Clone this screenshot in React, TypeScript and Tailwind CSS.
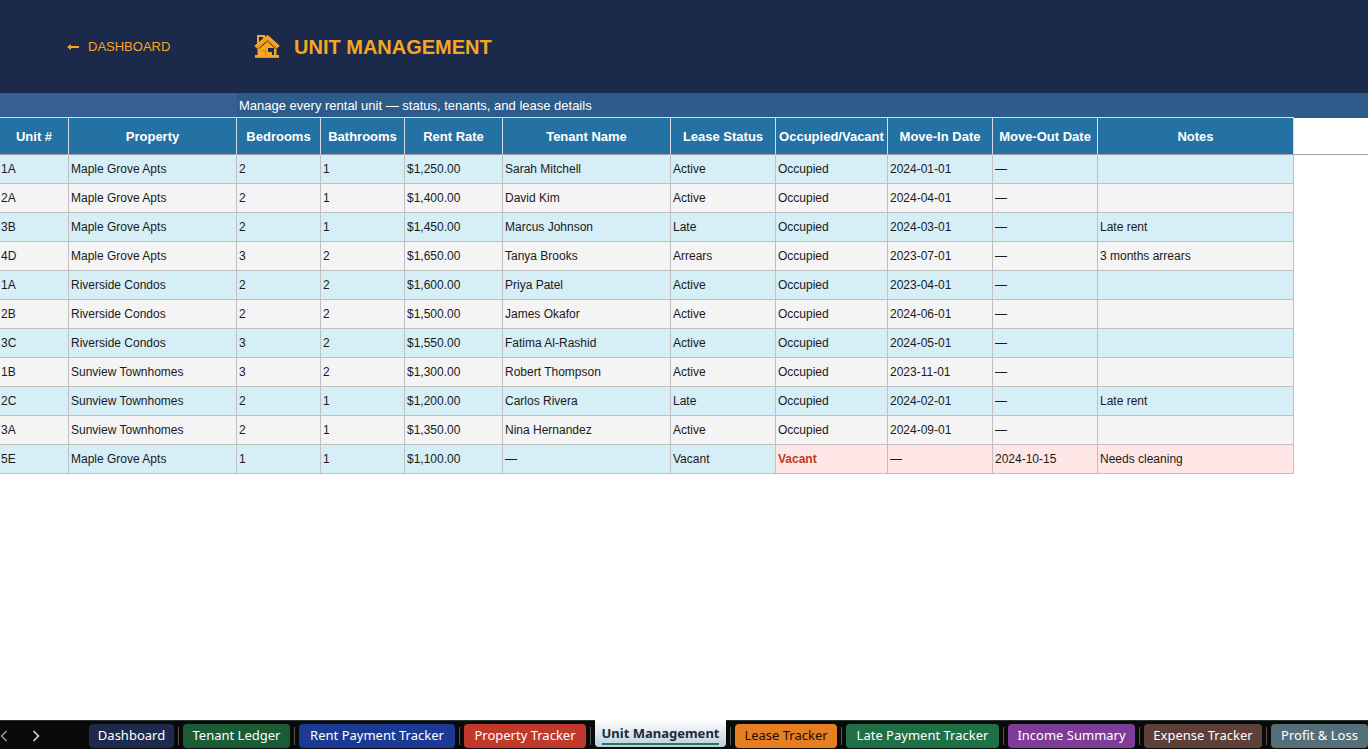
import { useState } from 'react';
import clsx from 'clsx';

interface Unit {
  unit: string;
  property: string;
  bedrooms: number;
  bathrooms: number;
  rent: number;
  tenant: string;
  lease: string;
  occupancy: 'Occupied' | 'Vacant';
  moveIn: string;
  moveOut: string;
  notes: string;
}

const columns = [
  { label: 'Unit #', width: 'w-[69px]' },
  { label: 'Property', width: 'w-[168px]' },
  { label: 'Bedrooms', width: 'w-[84px]' },
  { label: 'Bathrooms', width: 'w-[84px]' },
  { label: 'Rent Rate', width: 'w-[98px]' },
  { label: 'Tenant Name', width: 'w-[168px]' },
  { label: 'Lease Status', width: 'w-[105px]' },
  { label: 'Occupied/Vacant', width: 'w-[112px]' },
  { label: 'Move-In Date', width: 'w-[105px]' },
  { label: 'Move-Out Date', width: 'w-[105px]' },
  { label: 'Notes', width: 'w-[196px]' },
];

const units: Unit[] = [
  { unit: '1A', property: 'Maple Grove Apts', bedrooms: 2, bathrooms: 1, rent: 1250, tenant: 'Sarah Mitchell', lease: 'Active', occupancy: 'Occupied', moveIn: '2024-01-01', moveOut: '—', notes: '' },
  { unit: '2A', property: 'Maple Grove Apts', bedrooms: 2, bathrooms: 1, rent: 1400, tenant: 'David Kim', lease: 'Active', occupancy: 'Occupied', moveIn: '2024-04-01', moveOut: '—', notes: '' },
  { unit: '3B', property: 'Maple Grove Apts', bedrooms: 2, bathrooms: 1, rent: 1450, tenant: 'Marcus Johnson', lease: 'Late', occupancy: 'Occupied', moveIn: '2024-03-01', moveOut: '—', notes: 'Late rent' },
  { unit: '4D', property: 'Maple Grove Apts', bedrooms: 3, bathrooms: 2, rent: 1650, tenant: 'Tanya Brooks', lease: 'Arrears', occupancy: 'Occupied', moveIn: '2023-07-01', moveOut: '—', notes: '3 months arrears' },
  { unit: '1A', property: 'Riverside Condos', bedrooms: 2, bathrooms: 2, rent: 1600, tenant: 'Priya Patel', lease: 'Active', occupancy: 'Occupied', moveIn: '2023-04-01', moveOut: '—', notes: '' },
  { unit: '2B', property: 'Riverside Condos', bedrooms: 2, bathrooms: 2, rent: 1500, tenant: 'James Okafor', lease: 'Active', occupancy: 'Occupied', moveIn: '2024-06-01', moveOut: '—', notes: '' },
  { unit: '3C', property: 'Riverside Condos', bedrooms: 3, bathrooms: 2, rent: 1550, tenant: 'Fatima Al-Rashid', lease: 'Active', occupancy: 'Occupied', moveIn: '2024-05-01', moveOut: '—', notes: '' },
  { unit: '1B', property: 'Sunview Townhomes', bedrooms: 3, bathrooms: 2, rent: 1300, tenant: 'Robert Thompson', lease: 'Active', occupancy: 'Occupied', moveIn: '2023-11-01', moveOut: '—', notes: '' },
  { unit: '2C', property: 'Sunview Townhomes', bedrooms: 2, bathrooms: 1, rent: 1200, tenant: 'Carlos Rivera', lease: 'Late', occupancy: 'Occupied', moveIn: '2024-02-01', moveOut: '—', notes: 'Late rent' },
  { unit: '3A', property: 'Sunview Townhomes', bedrooms: 2, bathrooms: 1, rent: 1350, tenant: 'Nina Hernandez', lease: 'Active', occupancy: 'Occupied', moveIn: '2024-09-01', moveOut: '—', notes: '' },
  { unit: '5E', property: 'Maple Grove Apts', bedrooms: 1, bathrooms: 1, rent: 1100, tenant: '—', lease: 'Vacant', occupancy: 'Vacant', moveIn: '—', moveOut: '2024-10-15', notes: 'Needs cleaning' },
];

const sheets = [
  { name: 'Dashboard', width: 'w-[85px]', color: 'bg-[#1e2a4d] text-white' },
  { name: 'Tenant Ledger', width: 'w-[107px]', color: 'bg-[#1a5c36] text-white' },
  { name: 'Rent Payment Tracker', width: 'w-[156px]', color: 'bg-[#1c3a94] text-white' },
  { name: 'Property Tracker', width: 'w-[122px]', color: 'bg-[#c0392b] text-white' },
  { name: 'Unit Management', width: 'w-[131px]', color: 'bg-[#2471a3] text-white' },
  { name: 'Lease Tracker', width: 'w-[102px]', color: 'bg-[#e67e22] text-[#1c0d02]' },
  { name: 'Late Payment Tracker', width: 'w-[153px]', color: 'bg-[#1f7145] text-white' },
  { name: 'Income Summary', width: 'w-[127px]', color: 'bg-[#7d3c98] text-white' },
  { name: 'Expense Tracker', width: 'w-[118px]', color: 'bg-[#5d4037] text-white' },
  { name: 'Profit & Loss', width: 'w-[97px]', color: 'bg-[#546e7a] text-white' },
];

function HouseIcon() {
  return (
    <svg viewBox="0 0 26 24" className="h-6 w-[26px]" fill="none" aria-hidden="true">
      <path d="M4 10V1h6v4" stroke="#f5a623" strokeWidth="2" />
      <path d="M3.500 12.500 13.500 4l9 8.500V22h-19z" fill="#f5a623" />
      <path d="M5 13.500 13.500 6l8 7.500" stroke="#1b2a4a" strokeWidth="1" />
      <path d="M1.500 12 13.500 2l11 10" stroke="#f5a623" strokeWidth="3.500" strokeLinejoin="round" />
      <path d="M14 13h6v7h-2v-3h-4z" fill="#1b2a4a" />
      <path d="M7.500 15.500h4V21" stroke="#c98512" strokeWidth="1" />
      <path d="M1 21.500h24" stroke="#f5a623" strokeWidth="3" />
      <path d="M1 22.500h24" stroke="#d9921c" strokeWidth="1" />
    </svg>
  );
}

function Chevron({ left }: { left?: boolean }) {
  return (
    <svg viewBox="0 0 8 12" className="h-3 w-2" fill="none" stroke="currentColor" strokeWidth="1.5">
      <path d={left ? 'M6.500 1 1.500 6l5 5' : 'M1.500 1l5 5-5 5'} />
    </svg>
  );
}

function UnitRow({ row, striped }: { row: Unit; striped: boolean }) {
  const vacant = row.occupancy === 'Vacant';
  const base = striped ? 'bg-[#d6eef6]' : 'bg-[#f4f4f4]';
  const flag = vacant ? 'bg-[#ffe6e6]' : base;
  const cell = 'h-[29px] truncate border-r border-b border-[#c0c0c0] pl-0.5';

  return (
    <tr>
      <td className={clsx('h-[29px] truncate border-r border-b border-[#c0c0c0] pl-px', base)}>{row.unit}</td>
      <td className={clsx(cell, base)}>{row.property}</td>
      <td className={clsx(cell, base)}>{row.bedrooms}</td>
      <td className={clsx(cell, base)}>{row.bathrooms}</td>
      <td className={clsx(cell, base)}>
        ${row.rent.toLocaleString('en-US', { minimumFractionDigits: 2 })}
      </td>
      <td className={clsx(cell, base)}>{row.tenant}</td>
      <td className={clsx(cell, base)}>{row.lease}</td>
      <td className={clsx(cell, flag, vacant && 'font-bold text-[#c0392b]')}>{row.occupancy}</td>
      <td className={clsx(cell, flag)}>{row.moveIn}</td>
      <td className={clsx(cell, flag)}>{row.moveOut}</td>
      <td className={clsx(cell, flag)}>{row.notes}</td>
    </tr>
  );
}

export default function App() {
  const [active, setActive] = useState('Unit Management');

  return (
    <div className="flex h-screen flex-col overflow-hidden bg-white font-['Liberation_Sans',Arial,sans-serif] text-[#1a1a1a]">
      <header className="shrink-0">
        <div className="flex h-[93px] items-center bg-[#1b2a4a] text-[#f5a623]">
          <div className="w-[237px] pl-[66px]">
            <a href="#dashboard" className="flex items-center gap-2 text-[13px]">
              <svg viewBox="0 0 14 8" className="h-2 w-3.5" fill="currentColor" aria-hidden="true">
                <path d="M1 4 5 1v2h8v2H5v2z" />
              </svg>
              DASHBOARD
            </a>
          </div>
          <h1 className="flex items-center gap-3.5 pl-[17px] text-xl font-bold">
            <HouseIcon />
            UNIT MANAGEMENT
          </h1>
        </div>
        <div className="flex h-6 items-center bg-[#2e5c8a] text-[13px] text-white">
          <div className="h-full w-[237px] bg-[#375f91]" />
          <p className="pt-0.5 pl-0.5">Manage every rental unit — status, tenants, and lease details</p>
        </div>
      </header>

      <main className="flex min-h-0 flex-1 items-start overflow-hidden">
        <table className="w-[1294px] shrink-0 table-fixed border-separate border-spacing-0 text-xs">
          <thead>
            <tr>
              {columns.map((col) => (
                <th
                  key={col.label}
                  scope="col"
                  className={clsx(
                    'h-[38px] border-t border-r border-b border-t-[#d5dce8] border-r-[#d5dce8] border-b-[#a0a0a0] bg-[#2471a3] pt-0.5 text-[13px] font-bold whitespace-nowrap text-white',
                    col.width,
                  )}
                >
                  {col.label}
                </th>
              ))}
            </tr>
          </thead>
          <tbody>
            {units.map((row, i) => (
              <UnitRow key={i} row={row} striped={i % 2 === 0} />
            ))}
          </tbody>
        </table>
        {/* freeze line carries on past the last column */}
        <div className="h-[38px] flex-1 border-t border-b border-t-[#2e5c8a] border-b-[#a0a0a0]" />
      </main>

      <nav
        aria-label="Sheets"
        className="flex h-[29px] shrink-0 items-stretch border-t border-[#26332e] bg-[#0a0a0a] font-['Noto_Sans',sans-serif] text-[13px]"
      >
        <div className="flex w-[89px] shrink-0 items-center gap-6 pt-0.5">
          <button type="button" aria-label="Previous sheet" className="text-[#9a9a9a]">
            <Chevron left />
          </button>
          <button type="button" aria-label="Next sheet" className="text-[#e0e0e0]">
            <Chevron />
          </button>
        </div>
        {sheets.map((sheet, i) => (
          <div key={sheet.name} className="flex shrink-0">
            {i > 0 && <span className="mx-1 mt-1.5 mb-1 w-px bg-[#5c5650]" />}
            {sheet.name === active ? (
              <button
                type="button"
                aria-current="page"
                className={clsx(
                  '-mt-px mb-0.5 rounded-b bg-linear-to-b from-white to-[#b9cfe0] font-bold whitespace-nowrap text-[#1f2933]',
                  sheet.width,
                )}
              >
                <span className="inline-block border-b-2 border-[#217a5b] leading-5">{sheet.name}</span>
              </button>
            ) : (
              <button
                type="button"
                onClick={() => setActive(sheet.name)}
                className={clsx('mt-[3px] mb-px rounded whitespace-nowrap', sheet.width, sheet.color)}
              >
                {sheet.name}
              </button>
            )}
          </div>
        ))}
      </nav>
    </div>
  );
}
